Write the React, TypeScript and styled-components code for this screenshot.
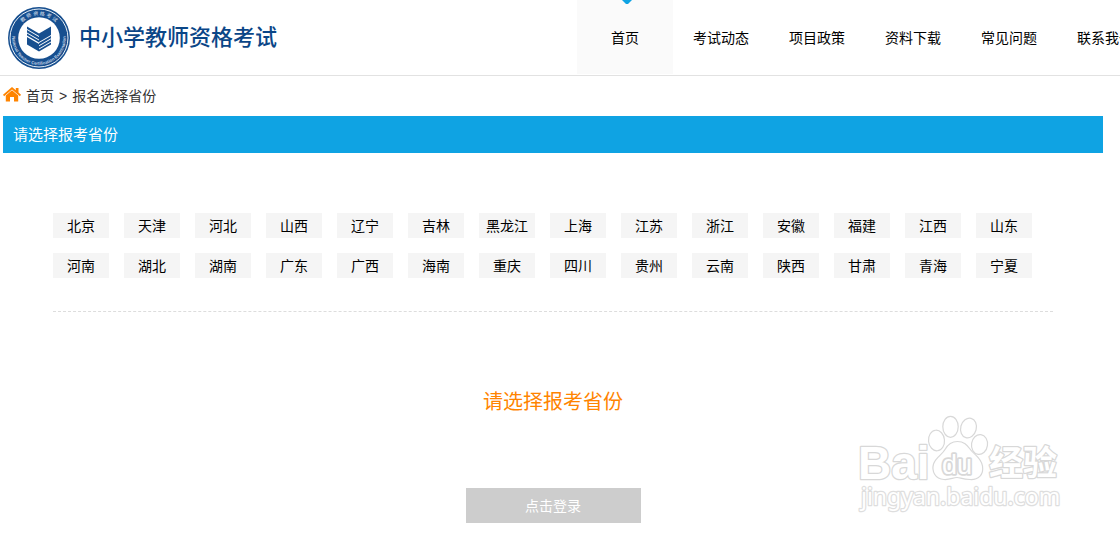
import React, { useState } from "react";
import styled, { createGlobalStyle } from "styled-components";

const GlobalStyle = createGlobalStyle`
  * { box-sizing: border-box; }
  body {
    margin: 0;
    background: #fff;
    color: #000;
    font: 14px/20px "Liberation Sans", "Noto Sans CJK SC", sans-serif;
    overflow-x: hidden;
  }
`;

const Header = styled.header`
  display: flex;
  height: 76px;
  overflow: hidden;
  border-bottom: 1px solid #e2e2e2;
`;

const Brand = styled.a`
  display: flex;
  flex: 0 0 577px;
  align-items: center;
  gap: 8px;
  padding-left: 7px;
  color: #0b4687;
  font-size: 22px;
  font-weight: 500;
  line-height: 32px;
  text-decoration: none;
`;

const Nav = styled.nav`
  display: flex;
  flex: none;
`;

const NavLink = styled.a<{ $active?: boolean }>`
  position: relative;
  width: 96px;
  height: 74px;
  line-height: 76px;
  text-align: center;
  color: #000;
  text-decoration: none;
  background: ${(p) => (p.$active ? "#fafafa" : "transparent")};
`;

const Marker = styled.svg`
  position: absolute;
  top: 0;
  left: 45px;
`;

const Page = styled.main`
  position: relative;
  max-width: 1103px;
  padding-left: 3px;
`;

const Crumbs = styled.nav`
  display: flex;
  align-items: center;
  gap: 5px;
  height: 40px;
  color: #333;
`;

const CrumbLink = styled.a`
  color: inherit;
  text-decoration: none;
`;

const PanelTitle = styled.h1`
  margin: 0;
  padding-left: 10px;
  background: #0fa3e3;
  color: #fff;
  font-size: 15px;
  font-weight: 400;
  line-height: 37px;
`;

const Provinces = styled.section`
  display: flex;
  flex-wrap: wrap;
  gap: 15px;
  margin: 60px 50px 0;
  padding-bottom: 33px;
  border-bottom: 1px dashed #ddd;
`;

const Province = styled.button`
  width: 56px;
  height: 25px;
  padding: 2px 0 0;
  border: 0;
  background: #f5f5f5;
  color: #000;
  font: inherit;
  line-height: 23px;
  cursor: pointer;
`;

const Login = styled.section`
  display: flex;
  flex-direction: column;
  align-items: center;
  padding: 75px 0 12px;
`;

const Prompt = styled.p`
  margin: 0 0 71px;
  color: #ff8400;
  font-size: 20px;
  line-height: 30px;
`;

const LoginButton = styled.button`
  width: 175px;
  height: 35px;
  border: 0;
  background: #cdcdcd;
  color: #fff;
  font: inherit;
`;

const Watermark = styled.svg`
  position: absolute;
  right: 37px;
  bottom: 20px;
  overflow: visible;
  pointer-events: none;
  font-family: "Open Sans", "Noto Sans CJK SC", sans-serif;
`;

const navItems = ["首页", "考试动态", "项目政策", "资料下载", "常见问题", "联系我们"];

const provinces = [
  "北京", "天津", "河北", "山西", "辽宁", "吉林", "黑龙江",
  "上海", "江苏", "浙江", "安徽", "福建", "江西", "山东",
  "河南", "湖北", "湖南", "广东", "广西", "海南", "重庆",
  "四川", "贵州", "云南", "陕西", "甘肃", "青海", "宁夏",
];

const Seal = () => (
  <svg width="64" height="64" viewBox="0 0 64 64" aria-hidden="true">
    <defs>
      <path id="sealTop" d="M9.3 32a22.7 22.7 0 0 1 45.4 0" />
      <path id="sealBottom" d="M5.8 27a26.7 26.7 0 1 0 52.4 0" />
    </defs>
    <circle cx="32" cy="32" r="31" fill="#174f8f" />
    <circle cx="32" cy="32" r="29" fill="none" stroke="#e8eff6" strokeWidth="1" />
    <circle cx="32" cy="32" r="20.8" fill="#fff" />
    <g fill="#c5d5e6" textAnchor="middle">
      <text fontSize="5">
        <textPath href="#sealTop" startOffset="50%">教 师 资 格 考 试</textPath>
      </text>
      <text fontSize="4.3" fontWeight="700">
        <textPath href="#sealBottom" startOffset="50%">National Teacher Certification Examination</textPath>
      </text>
    </g>
    <g fill="#174f8f">
      <path d="M20 20.500 32 27.500V29.900L20 22.900Z" />
      <path d="M20 24 32 31V33.400L20 26.400Z" />
      <path d="M20 27.500 32 34.500V36.500L20 29.500Z" />
      <path d="M20 31 32 38V45.500L20 38.500Z" />
      <path d="M32 27.500 44 20.500V29L32 36Z" />
      <path d="M32 37 44 30V32.200L32 39.200Z" />
      <path d="M32 40.300 44 33.300V35.500L32 42.500Z" />
      <path d="M32 43.500 44 36.500V38.500L32 45.500Z" />
    </g>
  </svg>
);

const HomeIcon = () => (
  <svg width="18" height="18" viewBox="0 0 18 18" aria-hidden="true">
    <path d="M9 0 12.800 3.200V1H15.500V5.500L18 7.700 16.900 9.200 9 2.600 1.100 9.200 0 7.700Z" fill="#ff8400" />
    <path d="M9 3.200 15.200 8.400V14.500H11V10H7V14.500H2.800V8.400Z" fill="#ff8400" />
  </svg>
);

const BaiduMark = () => (
  <Watermark width="206" height="100" viewBox="0 0 206 100" aria-label="Baidu 经验">
    <g fill="#fff" stroke="#d8d8d8" strokeWidth="1.200" strokeLinejoin="round">
      <text x="-2" y="64" fontSize="46" fontWeight="700" fontFamily="Liberation Sans" strokeWidth="2.500" paintOrder="stroke">
        Bai
      </text>
      <ellipse cx="76.500" cy="25.500" rx="8" ry="10.300" transform="rotate(-5 76.500 25.500)" />
      <ellipse cx="90.500" cy="11.800" rx="7.700" ry="10.500" />
      <ellipse cx="108.500" cy="13" rx="7.800" ry="10" transform="rotate(15 108.500 13)" />
      <ellipse cx="119.500" cy="29.500" rx="8" ry="10" transform="rotate(8 119.500 29.500)" />
      <path d="M97.500 26.500C104 26.500 107 30 110 34 113 39 121 42 122.500 51 124 60 118 65 110 64.500 102 64 100 62.500 97 62.500 93 62.500 90 65 84 64.500 75 64 71.500 56 73.500 49 76 42 82 40 85 34.500 88 29 92 26.500 97.500 26.500Z" />
      <text x="82" y="59" fontSize="27" fontWeight="400" fontFamily="Liberation Sans" strokeWidth="3.500" paintOrder="stroke">
        du
      </text>
      <text x="129" y="60" fontSize="34" fontWeight="700" strokeWidth="2.500" paintOrder="stroke">
        经验
      </text>
      <text x="1" y="90" fontSize="23" stroke="#dedede" strokeWidth="2.500" paintOrder="stroke" fontFamily="Noto Sans">
        jingyan.baidu.com
      </text>
    </g>
  </Watermark>
);

export default function App() {
  const [selected, setSelected] = useState("");

  return (
    <>
      <GlobalStyle />
      <Header>
        <Brand href="#">
          <Seal />
          <span>中小学教师资格考试</span>
        </Brand>
        <Nav aria-label="主导航">
          {navItems.map((item, i) => (
            <NavLink key={item} href="#" $active={i === 0}>
              {i === 0 && (
                <Marker width="10" height="4" viewBox="0 0 10 4" aria-hidden="true">
                  <path d="M0 0h10L6 4H4Z" fill="#0fa3e3" />
                </Marker>
              )}
              {item}
            </NavLink>
          ))}
        </Nav>
      </Header>
      <Page>
        <Crumbs aria-label="当前位置">
          <HomeIcon />
          <CrumbLink href="#">首页</CrumbLink>
          <span>&gt;</span>
          <span>报名选择省份</span>
        </Crumbs>
        <PanelTitle>请选择报考省份</PanelTitle>
        <Provinces>
          {provinces.map((name) => (
            <Province key={name} type="button" aria-pressed={selected === name} onClick={() => setSelected(name)}>
              {name}
            </Province>
          ))}
        </Provinces>
        <Login>
          <Prompt>{selected || "请选择报考省份"}</Prompt>
          <LoginButton type="button">点击登录</LoginButton>
        </Login>
        <BaiduMark />
      </Page>
    </>
  );
}
